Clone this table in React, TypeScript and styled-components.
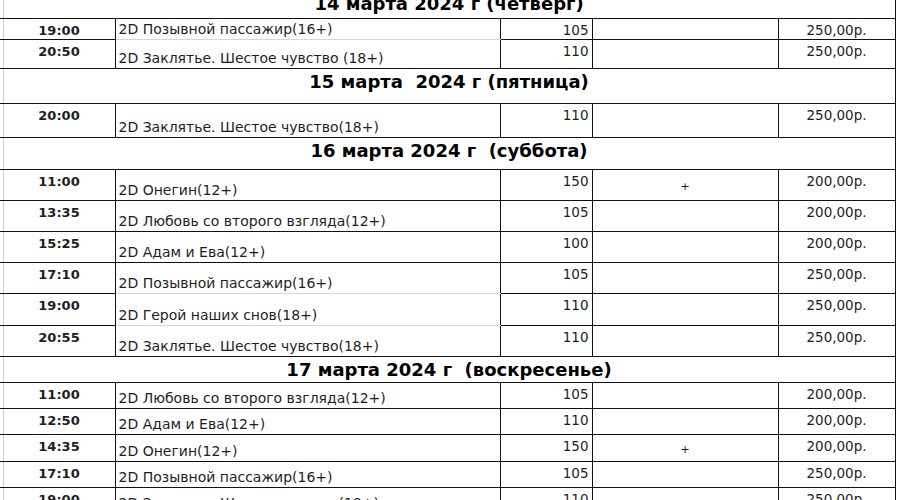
import React from "react";
import styled, { createGlobalStyle } from "styled-components";

const Global = createGlobalStyle`
  html, body { margin: 0; padding: 0; background: #ffffff; }
  body { overflow: hidden; font-family: "DejaVu Sans", "Noto Sans", sans-serif; }
`;

const LINE = "#111111";
const SOFT = "#d6d6d6";
const GRID = "#cfcfcf";

const Sheet = styled.table`
  border-collapse: collapse;
  table-layout: fixed;
  width: 895px;
  margin-top: -10px;
  font-family: "DejaVu Sans", "Noto Sans", sans-serif;
  color: #1e1e1e;
`;

const Col = styled.col<{ $w: number }>`
  width: ${(p) => p.$w}px;
`;

const Row = styled.tr<{ $h: number }>`
  height: ${(p) => p.$h}px;
`;

const Gutter = styled.td`
  padding: 0;
  border-top: 1px solid ${LINE};
  border-bottom: 1px solid ${LINE};
  border-right: 1px solid ${GRID};
`;

const DayCell = styled.td`
  padding: 2px 0 0;
  vertical-align: top;
  text-align: center;
  font-weight: bold;
  font-size: 18px;
  line-height: 22px;
  color: #000000;
  white-space: pre;
  border-top: 1px solid ${LINE};
  border-bottom: 1px solid ${LINE};
  border-right: 1px solid ${LINE};
`;

const TimeCell = styled.td`
  padding: 3px 0 0;
  vertical-align: top;
  text-align: center;
  font-weight: bold;
  font-size: 13px;
  line-height: 17px;
  border: 1px solid ${LINE};
  border-left: none;
`;

const TitleCell = styled.td<{ $top: boolean; $bottom: boolean }>`
  padding: 0 0 1px 3px;
  vertical-align: bottom;
  text-align: left;
  font-size: 14px;
  line-height: 17px;
  white-space: nowrap;
  overflow: hidden;
  border-left: 1px solid ${LINE};
  border-right: 1px solid ${LINE};
  border-top: 1px solid ${(p) => (p.$top ? SOFT : LINE)};
  border-bottom: 1px solid ${(p) => (p.$bottom ? SOFT : LINE)};
`;

const HallCell = styled.td`
  padding: 3px 3px 0 0;
  vertical-align: top;
  text-align: right;
  font-size: 13.5px;
  line-height: 17px;
  border: 1px solid ${LINE};
`;

const MarkCell = styled.td`
  padding: 4px 0 0;
  vertical-align: middle;
  text-align: center;
  font-size: 11px;
  line-height: 14px;
  border: 1px solid ${LINE};
`;

const PriceCell = styled.td`
  padding: 3px 0 0;
  vertical-align: top;
  text-align: center;
  font-size: 13.5px;
  line-height: 17px;
  border: 1px solid ${LINE};
`;

type Show = {
  kind: "show";
  h: number;
  time: string;
  title: string;
  hall: string;
  mark?: string;
  price: string;
  soft?: boolean;
};
type Day = { kind: "day"; h: number; label: string };
type Item = Show | Day;

const columns = [3, 112, 385, 92, 186, 117];

const rows: Item[] = [
  { kind: "day", h: 28, label: "14 марта 2024 г (четверг)" },
  { kind: "show", h: 21, time: "19:00", title: "2D Позывной пассажир(16+)", hall: "105", price: "250,00р." },
  { kind: "show", h: 29, time: "20:50", title: "2D Заклятье. Шестое чувство (18+)", hall: "110", price: "250,00р.", soft: true },
  { kind: "day", h: 35, label: "15 марта  2024 г (пятница)" },
  { kind: "show", h: 34, time: "20:00", title: "2D Заклятье. Шестое чувство(18+)", hall: "110", price: "250,00р." },
  { kind: "day", h: 32, label: "16 марта 2024 г  (суббота)" },
  { kind: "show", h: 31, time: "11:00", title: "2D Онегин(12+)", hall: "150", mark: "+", price: "200,00р." },
  { kind: "show", h: 31, time: "13:35", title: "2D Любовь со второго взгляда(12+)", hall: "105", price: "200,00р." },
  { kind: "show", h: 31, time: "15:25", title: "2D Адам и Ева(12+)", hall: "100", price: "200,00р." },
  { kind: "show", h: 31, time: "17:10", title: "2D Позывной пассажир(16+)", hall: "105", price: "250,00р." },
  { kind: "show", h: 32, time: "19:00", title: "2D Герой наших снов(18+)", hall: "110", price: "250,00р.", soft: true },
  { kind: "show", h: 31, time: "20:55", title: "2D Заклятье. Шестое чувство(18+)", hall: "110", price: "250,00р.", soft: true },
  { kind: "day", h: 26, label: "17 марта 2024 г  (воскресенье)" },
  { kind: "show", h: 26, time: "11:00", title: "2D Любовь со второго взгляда(12+)", hall: "105", price: "200,00р." },
  { kind: "show", h: 26, time: "12:50", title: "2D Адам и Ева(12+)", hall: "110", price: "200,00р." },
  { kind: "show", h: 27, time: "14:35", title: "2D Онегин(12+)", hall: "150", mark: "+", price: "200,00р." },
  { kind: "show", h: 26, time: "17:10", title: "2D Позывной пассажир(16+)", hall: "105", price: "250,00р." },
  { kind: "show", h: 26, time: "19:00", title: "2D Заклятье. Шестое чувство(18+)", hall: "110", price: "250,00р." },
];

export default function App() {
  return (
    <>
      <Global />
      <Sheet>
        <colgroup>
          {columns.map((w, i) => (
            <Col key={i} $w={w} />
          ))}
        </colgroup>
        <tbody>
          {rows.map((r, i) => {
            if (r.kind === "day") {
              return (
                <Row key={i} $h={r.h}>
                  <Gutter />
                  <DayCell colSpan={5}>{r.label}</DayCell>
                </Row>
              );
            }
            const next = rows[i + 1];
            const softBottom = !!(next && next.kind === "show" && next.soft);
            return (
              <Row key={i} $h={r.h}>
                <Gutter />
                <TimeCell>{r.time}</TimeCell>
                <TitleCell $top={!!r.soft} $bottom={softBottom}>
                  {r.title}
                </TitleCell>
                <HallCell>{r.hall}</HallCell>
                <MarkCell>{r.mark ?? ""}</MarkCell>
                <PriceCell>{r.price}</PriceCell>
              </Row>
            );
          })}
        </tbody>
      </Sheet>
    </>
  );
}
